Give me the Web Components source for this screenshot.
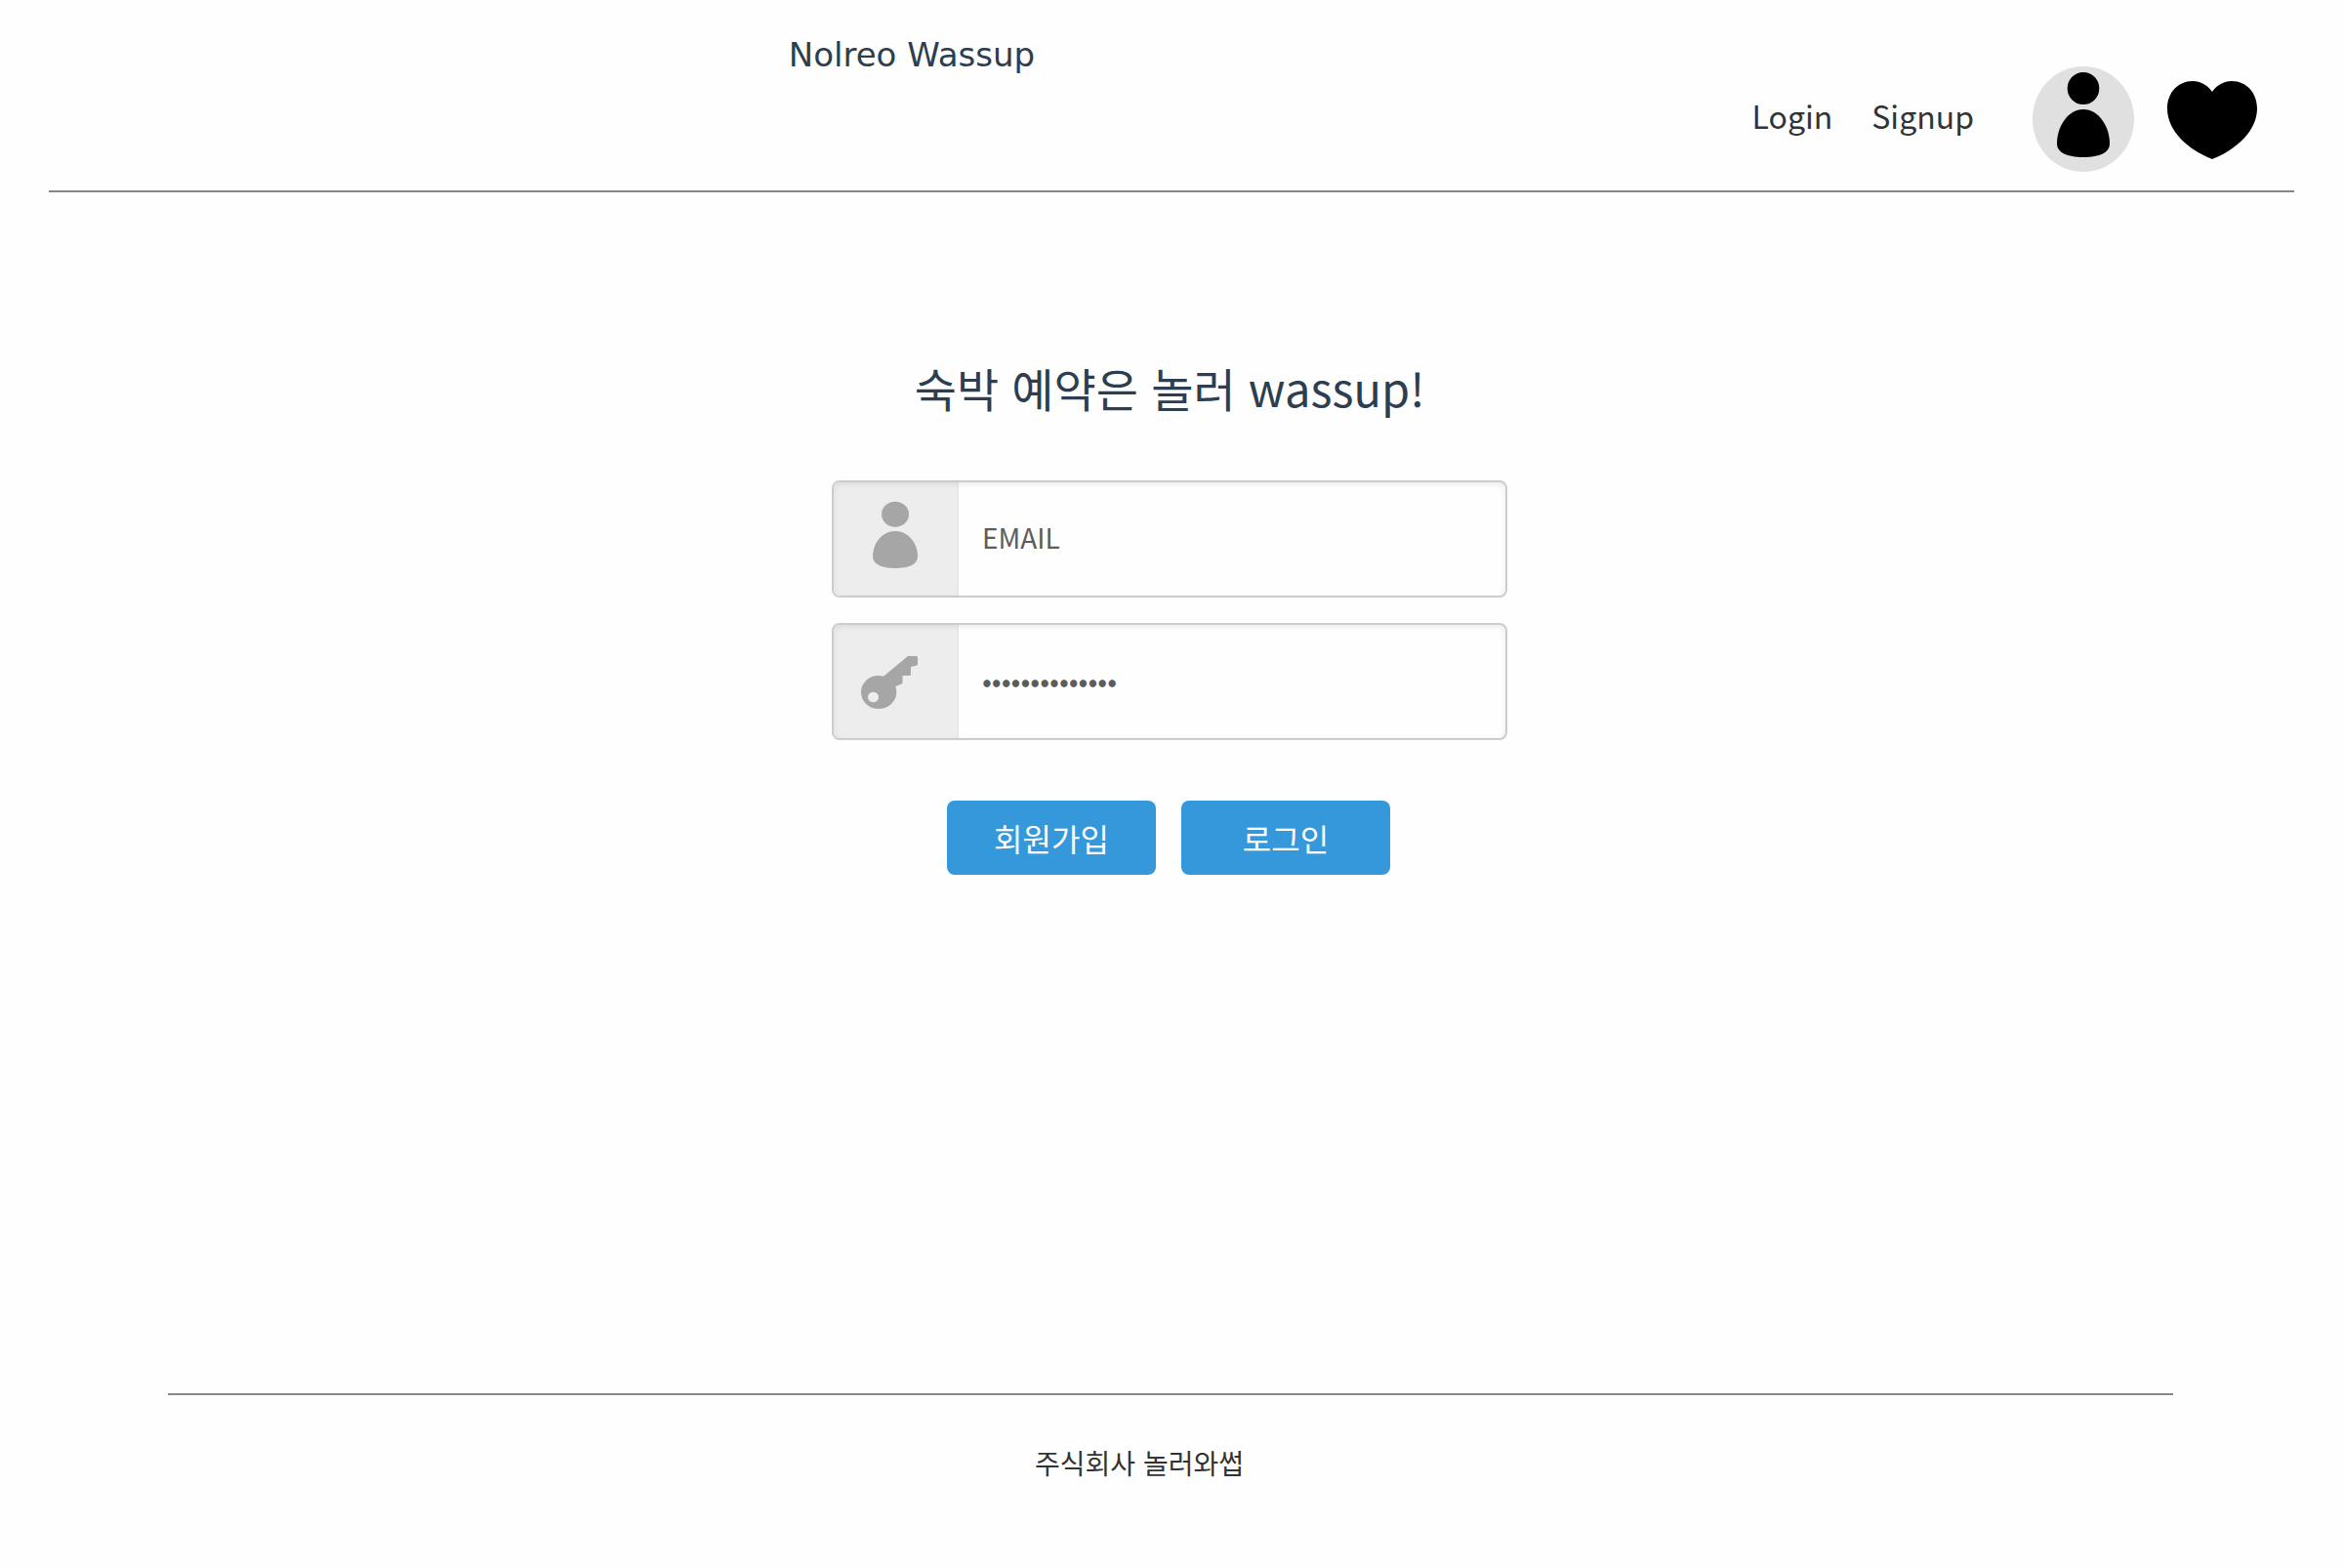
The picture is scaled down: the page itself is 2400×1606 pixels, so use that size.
<!DOCTYPE html>
<html lang="ko">
<head>
<meta charset="utf-8">
<title>Nolreo Wassup</title>
<style>
body { margin: 0; min-height: 100vh; display: flex; flex-direction: column; background: #fefefe; color: #333; font: 28px/40px "Noto Sans CJK KR", sans-serif; }
</style>
</head>
<body>
<site-header></site-header>
<login-form>
  <span slot="title">숙박 예약은 놀러 wassup!</span>
</login-form>
<site-footer>주식회사 놀러와썹</site-footer>

<script>
const define = (name, html) => customElements.define(name, class extends HTMLElement {
  constructor() {
    super();
    this.attachShadow({ mode: 'open' }).innerHTML = html;
  }
});

define('site-header', `
<style>
:host { display: block; margin: 0 50px; border-bottom: 2px solid #888; }
header { display: flex; justify-content: space-between; height: 195px; box-sizing: border-box; padding: 32px 38px 19px 0; }
a { color: inherit; text-decoration: none; }
.brand { margin-left: 33.5%; align-self: flex-start; font: 34px/48px "DejaVu Sans", sans-serif; color: #2c3e50; }
nav { display: flex; align-items: center; align-self: flex-end; font-size: 32px; line-height: 48px; }
nav a { margin-right: 40px; padding-bottom: 8px; }
nav a.profile { margin: 0 34px 0 20px; padding: 0; }
nav a.wish { margin: 0; padding: 0; }
svg { display: block; }
</style>
<header>
  <a class="brand" href="#">Nolreo Wassup</a>
  <nav>
    <a href="#">Login</a>
    <a href="#">Signup</a>
    <a class="profile" href="#" aria-label="Profile">
      <svg width="104" height="108" viewBox="0 0 104 108"><ellipse cx="52" cy="54" rx="52" ry="54" fill="#e0e0e0"/><ellipse cx="52" cy="22.500" rx="16.300" ry="16.500"/><path d="M52 44C68 44 79 62 79 79C79 88 69 93 52 93C35 93 25 88 25 79C25 62 36 44 52 44Z"/></svg>
    </a>
    <a class="wish" href="#" aria-label="Wishlist">
      <svg width="92" height="82" viewBox="0 -2 92 82"><path d="M46 11C41 4 34 0 26 0C11 0 0 12 0 28C0 51 21 70 46 80C71 70 92 51 92 28C92 12 81 0 66 0C58 0 51 4 46 11Z"/></svg>
    </a>
  </nav>
</header>`);

define('form-field', `
<style>
:host { display: block; }
label { display: flex; height: 120px; box-sizing: border-box; border: 2px solid #ccc; border-radius: 8px; overflow: hidden; position: relative; }
label::after { content: ""; position: absolute; inset: 0; border-radius: 6px; box-shadow: inset 0 2px 6px rgba(0,0,0,.08); pointer-events: none; }
.tile { flex: none; width: 126px; background: #ededed; border-right: 2px solid #e8e8e8; color: #a6a6a6; }
input { flex: 1; min-width: 0; border: 0; outline: 0; padding: 0 24px 4px; background: transparent; font: inherit; color: #5c5c5c; }
input[type=password] { font-size: 29px; }
input::placeholder { color: #5c5c5c; opacity: 1; }
</style>
<label><span class="tile"><slot></slot></span><input></label>`);
{
  const Base = customElements.get('form-field');
  customElements.define('login-field', class extends Base {
    connectedCallback() {
      const input = this.shadowRoot.querySelector('input');
      input.type = this.getAttribute('type');
      input.placeholder = this.getAttribute('placeholder');
      input.setAttribute('aria-label', this.getAttribute('label'));
    }
  });
}

define('login-form', `
<style>
:host { display: block; flex: 1; }
form { display: flex; flex-direction: column; align-items: center; margin: 164px 4px 0 0; }
h1 { margin: 0 0 59px; font-size: 47px; line-height: 72px; font-weight: 400; color: #2c3e50; }
.fields { display: grid; gap: 26px; width: 692px; max-width: 100%; }
login-field { display: block; }
svg { display: block; }
.actions { display: flex; gap: 26px; margin: 62px 2px 0 0; }
button { width: 214px; height: 76px; padding: 0; border: 0; border-radius: 8px; background: #3498db; color: #fff; font: 400 32px/48px "Noto Sans CJK KR", sans-serif; cursor: pointer; }
</style>
<form onsubmit="return false">
  <h1><slot name="title"></slot></h1>
  <div class="fields">
    <login-field type="email" placeholder="EMAIL" label="Email">
      <svg width="126" height="116" viewBox="0 0 126 116" fill="currentColor"><ellipse cx="63" cy="32.700" rx="14" ry="13"/><path d="M63 50C77 50 86 63 86 76C86 84 77 88 63 88C49 88 40 84 40 76C40 63 49 50 63 50Z"/></svg>
    </login-field>
    <login-field type="password" placeholder="••••••••••••••" label="Password">
      <svg width="126" height="116" viewBox="0 0 126 116" fill="currentColor"><path fill-rule="evenodd" d="M51 52.700L76 32H84.500Q86 32 86 33.500V40Q86 41.500 84.500 41.800L79 43V50.500Q79 52 77.500 52H70.500V59Q70.500 60.300 69 60.800L63.300 63C64 65 64.300 67 64.300 69C64.300 78.500 56 86 46 86C36 86 28 78.500 28 69C28 59.500 36 52 46 52Q48.500 52 51 52.700ZM40.500 68.700A5.500 5.300 0 1 0 40.500 79.300A5.500 5.300 0 1 0 40.500 68.700Z"/></svg>
    </login-field>
  </div>
  <div class="actions">
    <button type="button">회원가입</button>
    <button type="submit">로그인</button>
  </div>
</form>`);

define('site-footer', `
<style>
:host { display: block; margin: 0 174px 0 172px; border-top: 2px solid #888; }
footer { padding: 49px 64px 88px 0; text-align: center; }
</style>
<footer><slot></slot></footer>`);
</script>
</body>
</html>
